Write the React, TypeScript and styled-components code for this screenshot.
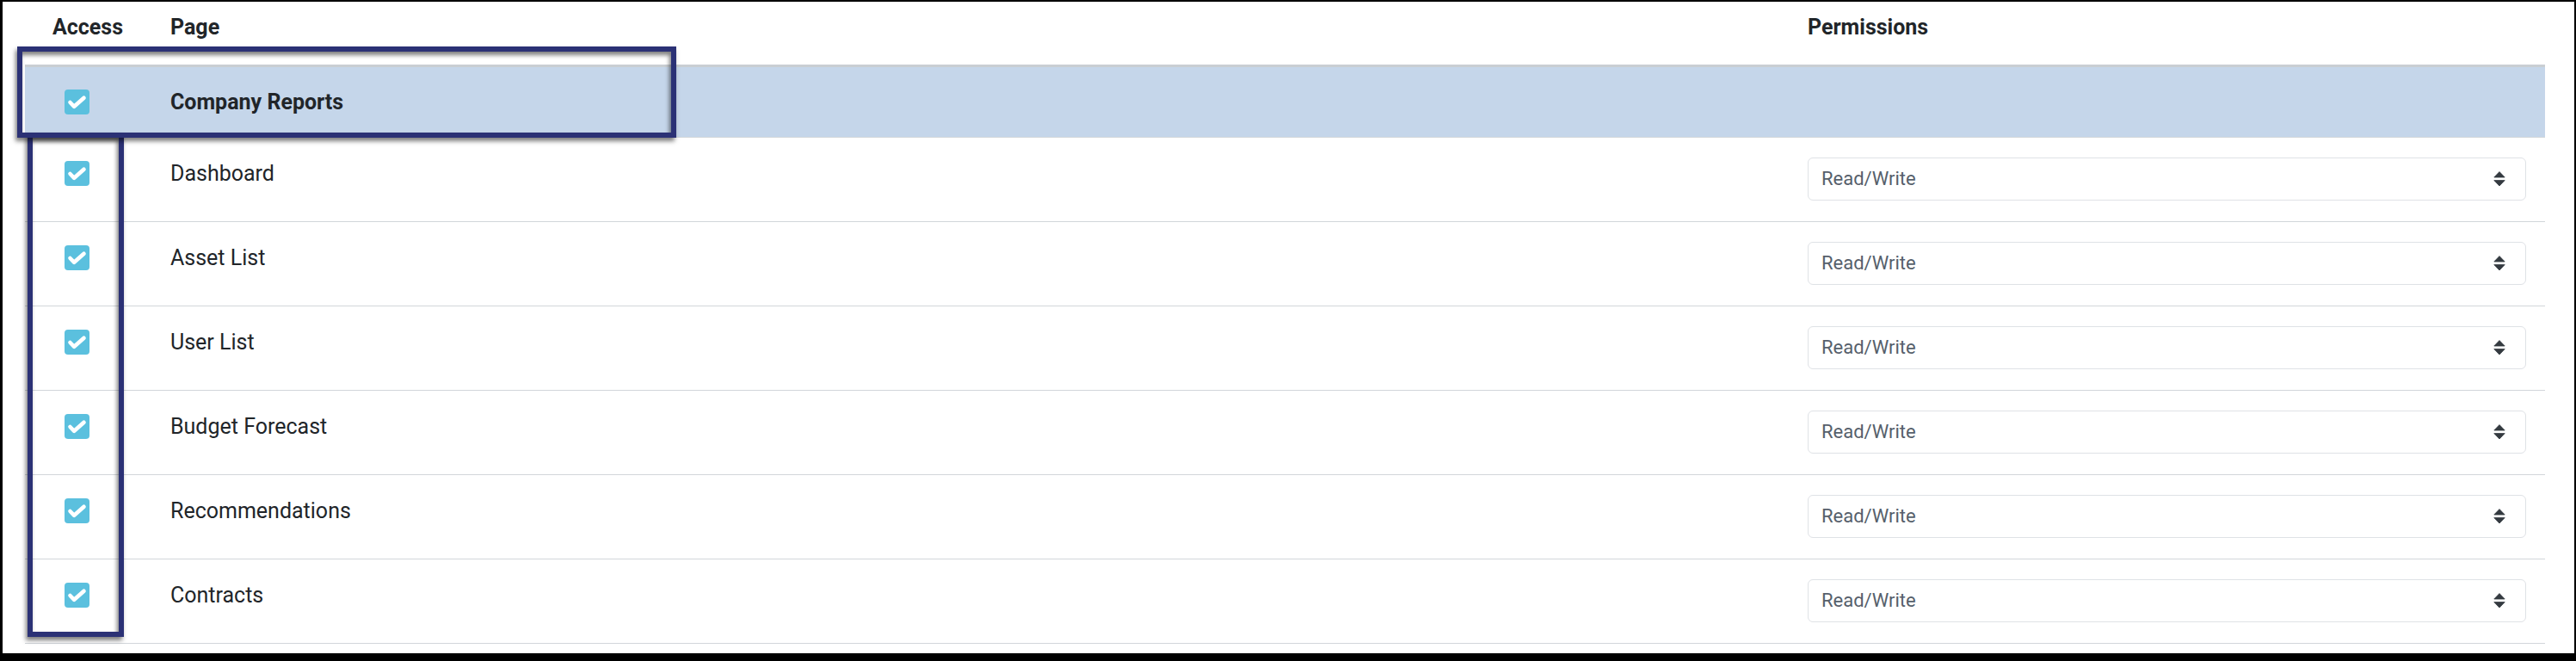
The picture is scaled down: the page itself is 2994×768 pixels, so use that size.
import React from "react";
import styled, { createGlobalStyle, css } from "styled-components";

const GlobalStyle = createGlobalStyle`
  html, body { margin: 0; padding: 0; background: #000; }
  body { font-family: Roboto, "Liberation Sans", Arial, sans-serif; }
  * { box-sizing: border-box; }
`;

const Frame = styled.div`
  position: relative;
  width: 2994px;
  height: 768px;
  background: #fff;
  border-style: solid;
  border-color: #000;
  border-width: 2px 2px 9px 3px;
  overflow: hidden;
`;

const Table = styled.div`
  margin-left: 26px;
  width: 2929px;
  color: #212529;
  font-size: 25px;
  line-height: 37.5px;
`;

const COLS = "137px 1903px 889px";

const HeaderRow = styled.div`
  display: grid;
  grid-template-columns: ${COLS};
  padding: 11px 0 24.5px;
  border-bottom: 3px solid #c9ced3;
`;

const HeaderCell = styled.div`
  padding-left: 32px;
  font-weight: 700;
`;

const Row = styled.div<{ $highlight?: boolean }>`
  display: grid;
  grid-template-columns: ${COLS};
  border-bottom: 1px solid #d2d6da;
  ${(p) =>
    p.$highlight
      ? css`
          background: #c5d6ea;
          padding: 21.5px 0 21.75px;
        `
      : css`
          padding: 23px 0 24px;
        `}
`;

const AccessCell = styled.div`
  padding-left: 46px;
  height: 37.5px;
  display: flex;
  align-items: center;
`;

const PageCell = styled.div<{ $bold?: boolean }>`
  padding-left: 32px;
  font-weight: ${(p) => (p.$bold ? 700 : 400)};
`;

const PermCell = styled.div`
  padding: 0 22px 0 32px;
`;

const CheckBox = styled.span`
  width: 29px;
  height: 29px;
  border-radius: 4px;
  background: #5bc0de;
  display: inline-flex;
  align-items: center;
  justify-content: center;
`;

const Select = styled.div`
  height: 50px;
  width: 100%;
  border: 1px solid #dfe2e6;
  border-radius: 6px;
  background: #fff;
  display: flex;
  align-items: center;
  justify-content: space-between;
  padding: 0 23px 0 15px;
`;

const SelectText = styled.span`
  font-size: 22px;
  color: #56606b;
  line-height: 1;
`;

const Callout = styled.div<{ $x: number; $y: number; $w: number; $h: number }>`
  position: absolute;
  left: ${(p) => p.$x}px;
  top: ${(p) => p.$y}px;
  width: ${(p) => p.$w}px;
  height: ${(p) => p.$h}px;
  border: 6px solid #2b3175;
  box-shadow: -2px 4px 5px rgba(0, 0, 0, 0.5), inset -2px 4px 5px rgba(0, 0, 0, 0.5);
  pointer-events: none;
`;

const Check = () => (
  <CheckBox>
    <svg width="29" height="29" viewBox="0 0 29 29">
      <path
        d="M6.5 15 L11.2 19.8 L22.5 9.8"
        fill="none"
        stroke="#fff"
        strokeWidth="4.6"
        strokeLinecap="round"
        strokeLinejoin="round"
      />
    </svg>
  </CheckBox>
);

const SortIcon = () => (
  <svg width="14" height="18" viewBox="0 0 14 18">
    <path d="M0.8 7 L7 0.6 L13.2 7 Z" fill="#343a40" stroke="#343a40" strokeWidth="0.8" strokeLinejoin="round" />
    <path d="M0.8 10.6 L13.2 10.6 L7 17 Z" fill="#343a40" stroke="#343a40" strokeWidth="0.8" strokeLinejoin="round" />
  </svg>
);

const pages = ["Dashboard", "Asset List", "User List", "Budget Forecast", "Recommendations", "Contracts"];

export default function App() {
  return (
    <>
      <GlobalStyle />
      <Frame>
        <Table>
          <HeaderRow>
            <HeaderCell>Access</HeaderCell>
            <HeaderCell>Page</HeaderCell>
            <HeaderCell>Permissions</HeaderCell>
          </HeaderRow>
          <Row $highlight>
            <AccessCell>
              <Check />
            </AccessCell>
            <PageCell $bold>Company Reports</PageCell>
            <PermCell />
          </Row>
          {pages.map((p) => (
            <Row key={p}>
              <AccessCell>
                <Check />
              </AccessCell>
              <PageCell>{p}</PageCell>
              <PermCell>
                <Select>
                  <SelectText>Read/Write</SelectText>
                  <SortIcon />
                </Select>
              </PermCell>
            </Row>
          ))}
        </Table>
        <Callout $x={29} $y={152} $w={112} $h={586} />
        <Callout $x={17} $y={52} $w={766} $h={106} />
      </Frame>
    </>
  );
}
